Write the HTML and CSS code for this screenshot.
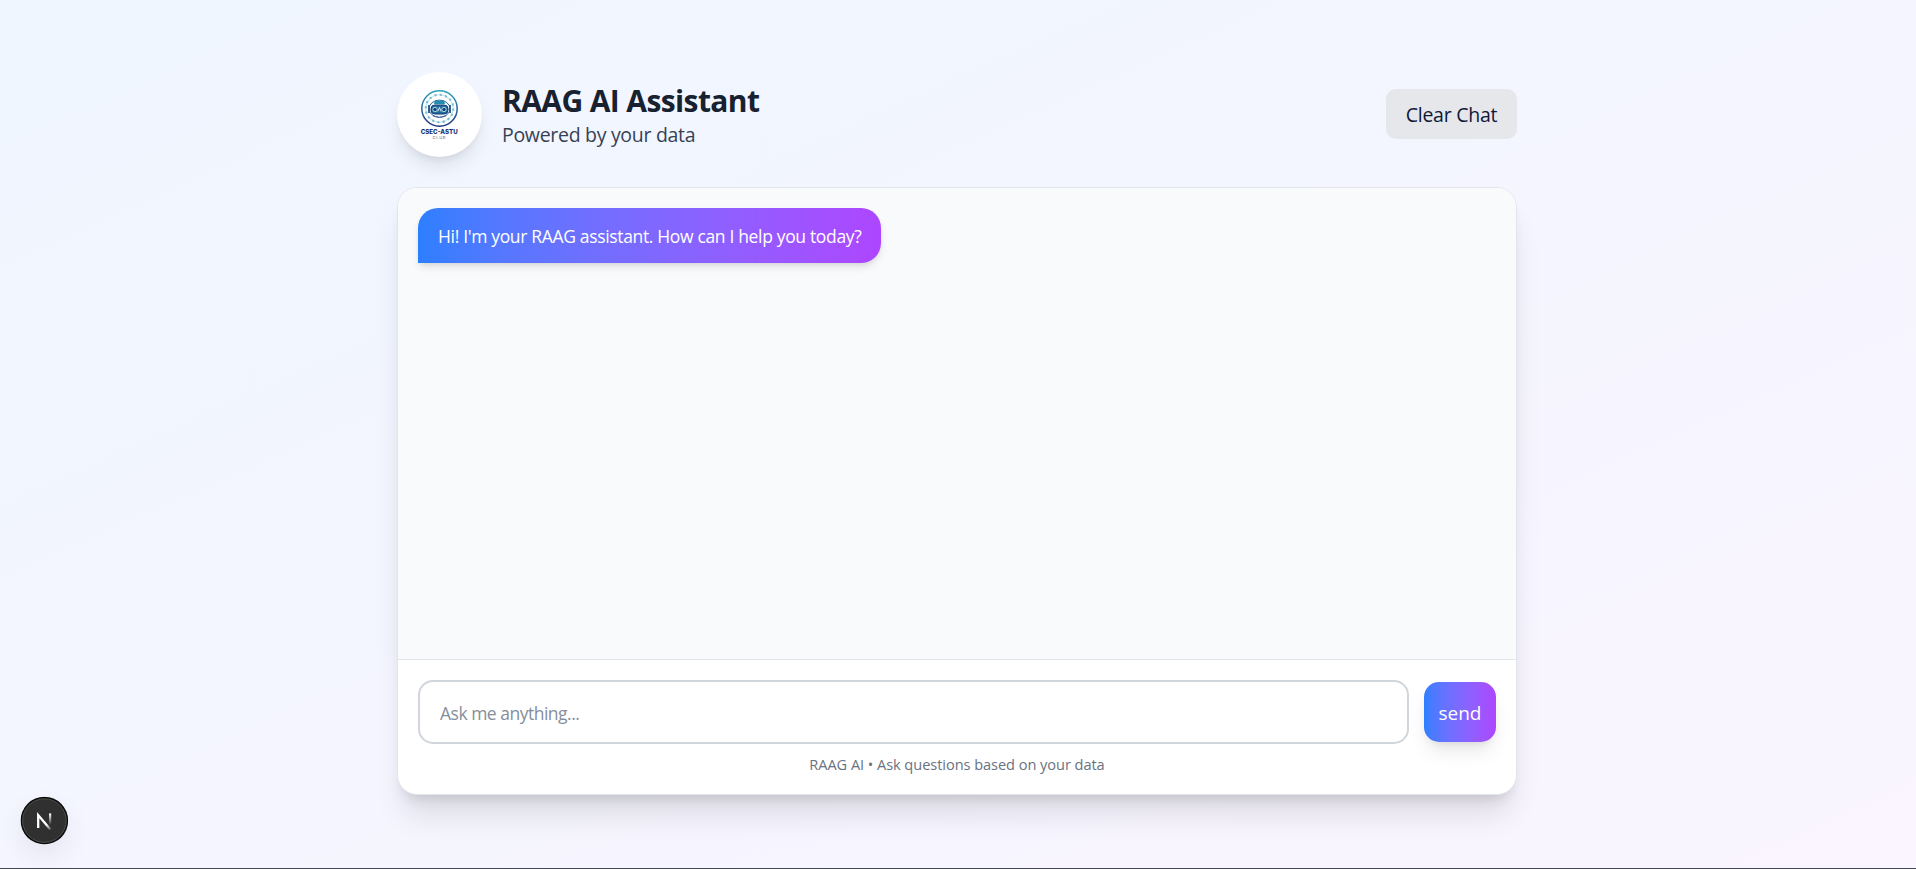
FILE: index.html
```html
<!DOCTYPE html>
<html lang="en">
<head>
<meta charset="utf-8">
<title>RAAG AI Assistant</title>
<link rel="stylesheet" href="styles.css">
</head>
<body>
<main class="page">
  <header class="header">
    <div class="brand">
      <div class="logo">
        <svg width="85" height="85" viewBox="0 0 85 85">
          <defs>
            <linearGradient id="ring" x1="0" y1="0" x2="0" y2="1"><stop offset="0" stop-color="#2ba3bd"/><stop offset="1" stop-color="#1c3182"/></linearGradient>
          </defs>
          <circle cx="42.5" cy="36.5" r="17.7" fill="#fff" stroke="url(#ring)" stroke-width="1.5"/>
          <circle cx="42.5" cy="36.5" r="13.8" fill="none" stroke="#68b4ce" stroke-width="2" stroke-dasharray="2.2 3.2"/>
          <circle cx="42.5" cy="36.5" r="13.8" fill="none" stroke="#9bcbdc" stroke-width=".6"/>
          <ellipse cx="42.5" cy="36.7" rx="10.5" ry="8.6" fill="#e6f4f9" stroke="#2d6196" stroke-width="1"/>
          <path d="M38 28.5h9l1 3.5H37z" fill="#218dae"/>
          <path d="M32 33v8M53 33v8" stroke="#23568f" stroke-width="1.8"/>
          <rect x="34" y="33" width="17" height="9" rx="4" fill="#236b9b" stroke="#173a79"/>
          <circle cx="38" cy="37.5" r="2.2" fill="#174178" stroke="#b9e8f1" stroke-width=".9"/>
          <circle cx="47" cy="37.5" r="2.2" fill="#174178" stroke="#b9e8f1" stroke-width=".9"/>
          <path d="m40.8 39.5 1.7-4 1.700 4" fill="none" stroke="#d9f8fb" stroke-width=".9"/>
          <path d="M36 44q6.500 3 13 0" fill="none" stroke="#59669b"/>
          <text class="logo-name" x="23.700" y="61.800" textLength="37" lengthAdjust="spacingAndGlyphs">CSEC-ASTU</text>
          <text class="logo-sub" x="35.500" y="66.500" textLength="13">CLUB</text>
        </svg>
      </div>
      <div class="titles">
        <h1 class="title">RAAG AI Assistant</h1>
        <p class="subtitle">Powered by your data</p>
      </div>
    </div>
    <button class="clear"><span>Clear Chat</span></button>
  </header>
  <section class="card">
    <div class="messages">
      <div class="bubble"><span>Hi! I'm your RAAG assistant. How can I help you today?</span></div>
    </div>
    <div class="composer">
      <div class="row">
        <div class="field"><span>Ask me anything...</span></div>
        <button class="send"><span>send</span></button>
      </div>
      <p class="note"><span>RAAG AI • Ask questions based on your data</span></p>
    </div>
  </section>
</main>
<div class="devtools">
  <svg width="48" height="48" viewBox="0 0 48 48">
    <defs>
      <linearGradient id="diag" gradientUnits="userSpaceOnUse" x1="24" y1="24" x2="31" y2="33"><stop offset="0" stop-color="#fff"/><stop offset=".4" stop-color="#fff"/><stop offset="1" stop-color="#fff" stop-opacity="0.1"/></linearGradient>
      <linearGradient id="stem" x1="0" y1="0" x2="0" y2="1"><stop offset="0" stop-color="#fff"/><stop offset="1" stop-color="#fff" stop-opacity="0"/></linearGradient>
    </defs>
    <circle cx="24" cy="24" r="23.800" fill="#0c0c0c"/>
    <circle cx="24" cy="24" r="21.800" fill="#303030" stroke="#505050" stroke-width="1"/>
    <path d="M17.800 31.500V18.500L30 33" fill="none" stroke="url(#diag)" stroke-width="2.300"/>
    <rect x="28.600" y="16.800" width="2.200" height="11.500" fill="url(#stem)"/>
  </svg>
</div>
<div class="edge"></div>
</body>
</html>
```
FILE: styles.css
```css
* { box-sizing: border-box; }
body {
  margin: 0;
  height: 869px;
  overflow: hidden;
  font-family: "Open Sans", "Noto Sans", sans-serif;
  font-weight: 385;
  background: linear-gradient(to bottom right in oklab, #eff6ff, #faf5ff);
}
h1, p { margin: 0; }
button { border: 0; padding: 0; font-family: inherit; font-weight: inherit; }
span { white-space: nowrap; }
.page { width: 1120px; margin: 0 auto; padding-top: 72px; position: relative; left: -1px; }
.header { display: flex; justify-content: space-between; align-items: center; height: 85px; }
.brand { display: flex; align-items: center; gap: 20px; }
.logo {
  width: 85px; height: 85px; border-radius: 50%; background: #fff;
  box-shadow: 0 12px 19px -4px rgba(0,0,0,.1), 0 5px 8px -5px rgba(0,0,0,.1);
}
.logo svg { display: block; }
.logo-name { font: 800 6.2px Inter, sans-serif; fill: #17306f; }
.logo-sub { font: 500 4px Inter, sans-serif; fill: #777b94; }
.titles { padding-top: 5px; }
.title { font-size: 30px; line-height: 35px; font-weight: 700; color: #172130; letter-spacing: -.6px; white-space: nowrap; width: max-content; }
.subtitle { font-size: 19.5px; line-height: 33px; color: #364153; letter-spacing: -.3px; width: max-content; }
.clear { width: 131px; height: 50px; margin-bottom: 1px; border-radius: 10px; background: #e5e7eb; color: #101838; font-size: 19.5px; letter-spacing: -.25px; }
.card {
  margin-top: 30px; height: 608px; border: 1px solid #e2e5ea; border-radius: 20px;
  overflow: hidden; background: #fff; display: flex; flex-direction: column;
  box-shadow: 0 25px 31px -6px rgba(0,0,0,.11), 0 10px 13px -7px rgba(0,0,0,.13);
}
.messages { flex: 1; background: #f9fafb; padding: 20px; }
.bubble {
  width: 463px; height: 55px; display: flex; align-items: center; padding: 1px 0 0 20px;
  border-radius: 20px 20px 20px 0; color: #fff; font-size: 17.5px; letter-spacing: -.34px;
  background: linear-gradient(to right in oklab, #2b7fff, #ad46ff);
  box-shadow: 0 5px 8px -1px rgba(0,0,0,.1), 0 2px 5px -2px rgba(0,0,0,.1);
}
.composer { height: 135px; border-top: 1px solid #e2e5ea; padding: 20px; }
.row { display: flex; align-items: center; gap: 15px; }
.field {
  flex: 1; height: 64px; border: 2px solid #d1d5dc; border-radius: 15px;
  display: flex; align-items: center; padding: 2px 0 0 20px; color: #858e9d; font-size: 17.5px; letter-spacing: -.5px;
}
.send {
  width: 72px; height: 60px; border-radius: 15px; color: #fff; font-size: 19px; padding-top: 1px;
  background: linear-gradient(to right in oklab, #2b7fff, #ad46ff);
  box-shadow: 0 12px 19px -4px rgba(0,0,0,.1), 0 5px 8px -5px rgba(0,0,0,.1);
}
.note { margin-top: 10px; line-height: 20px; font-size: 14.6px; letter-spacing: -.06px; color: #6a7282; text-align: center; }
.devtools { position: absolute; left: 20px; top: 796px; width: 48px; height: 48px; border-radius: 50%; box-shadow: 0 12px 28px rgba(0,0,0,.07); transform: translate(.4px, .6px); }
.devtools svg { display: block; }
.edge { position: absolute; left: 0; right: 0; top: 868px; height: 1px; background: #444852; }
```
